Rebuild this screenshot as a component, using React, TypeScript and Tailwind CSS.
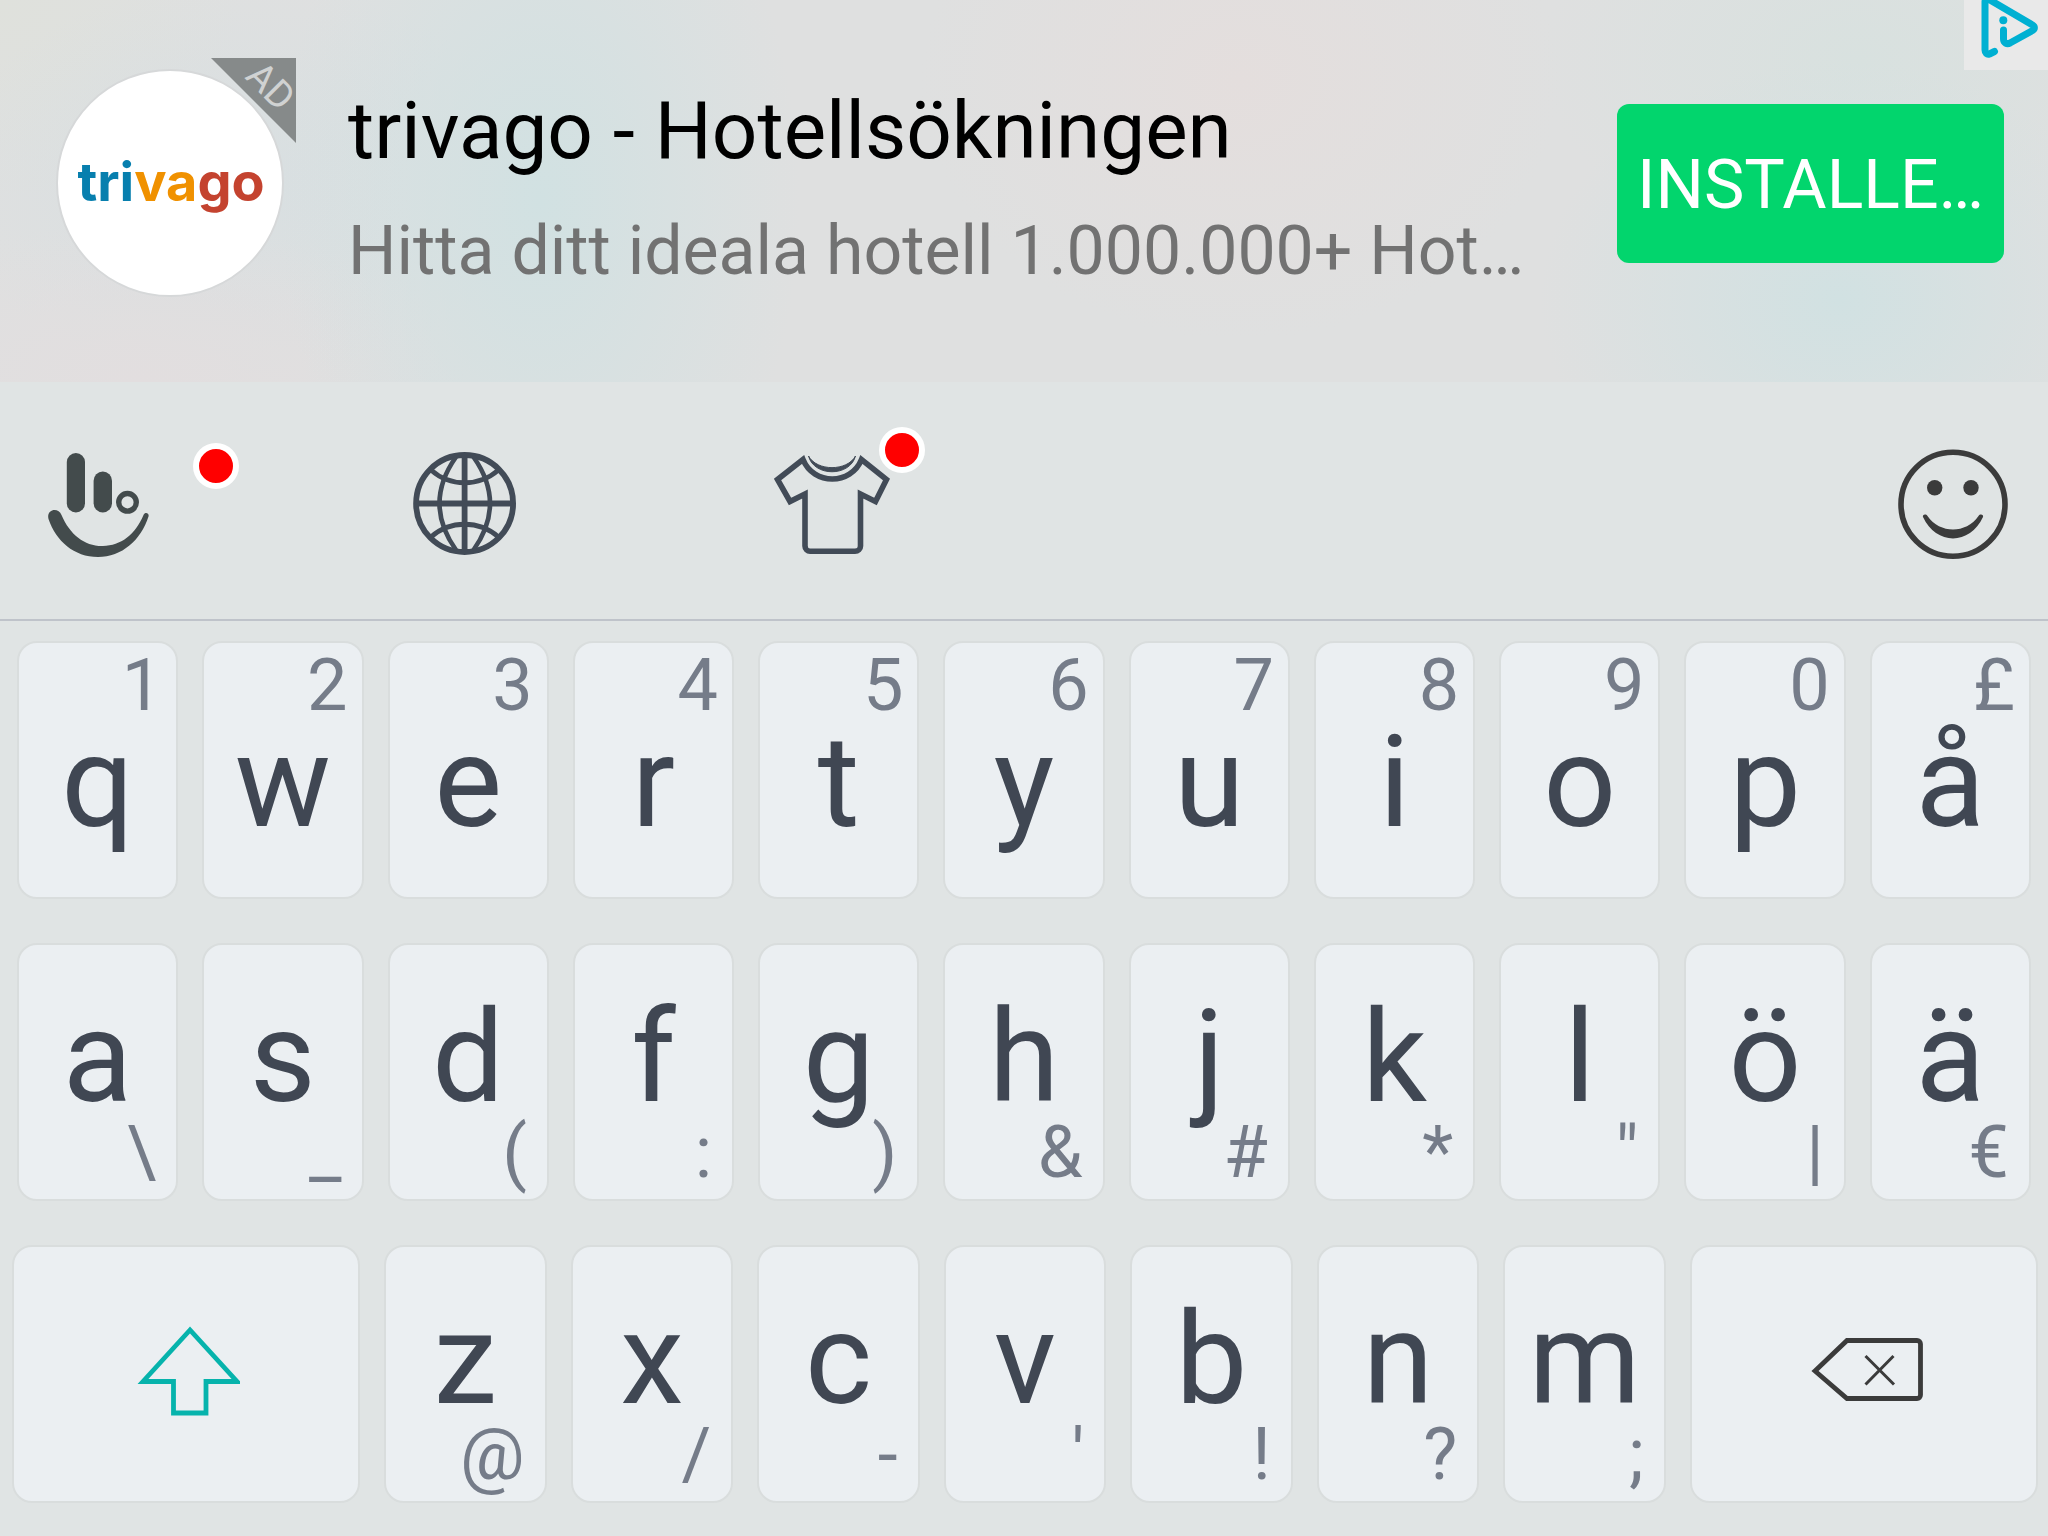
import type { ReactNode } from "react";

type KeyDef = { label: string; hint: string };

const toKeys = (letters: string, hints: string): KeyDef[] =>
  letters.split("").map((label, i) => ({ label, hint: hints[i] }));

const topRow = toKeys("qwertyuiopå", "1234567890£");
const homeRow = toKeys("asdfghjklöä", "\\_(:)&#*\"|€");
const bottomRow = toKeys("zxcvbnm", "@/-'!?;");

const keyBase = "rounded-[20px] border-2 border-[#d9dddd] bg-[#ebeff2]";

function LetterKey({ label, hint, hintTop }: KeyDef & { hintTop?: boolean }) {
  const letter = (
    <span className="text-center text-[128px] leading-[120px] text-[#404753]">{label}</span>
  );

  if (hintTop) {
    return (
      <button className={`${keyBase} flex flex-col pt-[7px] pb-[55px]`}>
        <span className="pr-[14px] text-right text-7xl leading-[72px] text-[#757c89]">{hint}</span>
        {letter}
      </button>
    );
  }

  return (
    <button className={`${keyBase} flex flex-col pt-[52px] pb-[10px]`}>
      {letter}
      <span className="pr-5 text-right text-7xl leading-[72px] text-[#757c89]">{hint}</span>
    </button>
  );
}

function ToolButton({ label, children }: { label: string; children: ReactNode }) {
  return (
    <button aria-label={label} className="relative size-32 shrink-0">
      {children}
    </button>
  );
}

function AdBanner() {
  return (
    <section className="relative flex items-start bg-[#dfe0e0] bg-[radial-gradient(ellipse_260px_420px_at_540px_200px,#d1e1e2,transparent),radial-gradient(ellipse_300px_240px_at_1840px_300px,#d1e1e2,transparent),radial-gradient(ellipse_320px_260px_at_1240px_80px,#e4dedd,transparent),radial-gradient(ellipse_340px_160px_at_140px_382px,#e2dedf,transparent),radial-gradient(ellipse_300px_200px_at_240px_180px,#d8dfe1,transparent),radial-gradient(ellipse_320px_200px_at_1860px_60px,#d8e1df,transparent),radial-gradient(ellipse_240px_200px_at_0px_0px,#dfe1dc,transparent)] pt-[69px] pr-11 pb-[85px] pl-14">
      <div className="relative shrink-0">
        <div className="flex size-[228px] items-center justify-center rounded-full border-2 border-[#d6d8d9] bg-white pb-[2px] pl-[2px]">
          <span className="font-[Inter,sans-serif] text-[54px] leading-[60px] font-bold text-[#077fae]">
            tri<span className="text-[#f09100]">va</span>
            <span className="text-[#c4432f]">go</span>
          </span>
        </div>
        <div className="absolute -top-[11px] -right-3 size-[85px] bg-[#868a8a] [clip-path:polygon(0_0,100%_0,100%_100%)]">
          <span className="absolute top-[8px] right-0 rotate-45 text-[38px] leading-10 text-[#d0d2d2]">
            AD
          </span>
        </div>
      </div>

      <div className="flex min-w-0 flex-1 flex-col gap-8 overflow-hidden pt-[14px] pl-16 whitespace-nowrap">
        <h1 className="text-[80px] leading-24 text-black">trivago - Hotellsökningen</h1>
        <p className="text-[68px] leading-20 text-[#727272]">
          Hitta ditt ideala hotell 1.000.000+ Hot…
        </p>
      </div>

      <button className="mt-[35px] w-[387px] shrink-0 rounded-xl bg-[#02d56d] pt-[41px] pb-[38px] text-[68px] leading-20 text-white">
        INSTALLE…
      </button>

      <a href="#adchoices" aria-label="AdChoices" className="absolute top-0 right-0 bg-[#e9e9e9]">
        <svg viewBox="0 0 84 70" className="h-[70px] w-[84px]" fill="none">
          <path
            d="M30.500 51.500l-5 2.500c-2.500 1-4.500-1-4.500-4V2c0-3 2.500-3.500 5-2L68.500 25c2.500 1.500 2.500 4 0 5.500L46 43c-3 1.500-6.500 0-6.500-4V30"
            stroke="#00b0d2"
            strokeWidth="7"
            strokeLinecap="round"
            strokeLinejoin="round"
          />
          <circle cx="39.300" cy="20.300" r="4" fill="#00b0d2" />
        </svg>
      </a>
    </section>
  );
}

function Toolbar() {
  return (
    <nav className="flex border-b-2 border-[#bfc3ca] pt-[55px] pr-[31px] pb-[54px] pl-9">
      <div className="flex flex-1 gap-[236px]">
        <ToolButton label="Menu">
          <svg viewBox="36 437 128 128" fill="#434b4c" className="size-32">
            <rect x="66.800" y="453" width="18.200" height="59.500" rx="9.100" />
            <rect x="93.600" y="471.500" width="18.400" height="41" rx="9.200" />
            <circle cx="127.500" cy="502.300" r="8.800" fill="none" stroke="#434b4c" strokeWidth="5.400" />
            <path d="M48.500 519C46 509 58.500 507 61.500 515C70 535 85 546.500 103 546C121 545.500 135 535 143.500 515C145 511.500 149.500 513 148.500 516.500C141 540 122 557 98 557C74 557 56 541 48.500 519Z" />
          </svg>
          <span className="absolute top-[6px] left-[157px] size-[46px] rounded-full border-6 border-white bg-[#ff0000]" />
        </ToolButton>
        <ToolButton label="Language">
          <svg viewBox="400 437 128 128" fill="none" stroke="#424b57" strokeWidth="5" className="size-32">
            <circle cx="464.600" cy="503.500" r="48.500" strokeWidth="5.800" />
            <path d="M464.600 455V552M416 503.500H513" strokeWidth="5.800" />
            <path d="M456 457C434 488 434 519 456 550M473.500 457C495.500 488 495.500 519 473.500 550" strokeWidth="4.600" />
            <path d="M431 470C450 487 479 487 498.500 470M431 537C450 520 479 520 498.500 537" strokeWidth="4.800" />
          </svg>
        </ToolButton>
        <ToolButton label="Themes">
          <svg viewBox="764 437 128 128" fill="none" stroke="#424b57" strokeWidth="5.600" className="size-32">
            <path d="M803 459.500L777.500 479.500L790 501.500L805 494V546C805 549 807.500 551.300 810 551.300H855C858 551.300 860.500 549 860.500 546V494L875.500 501.500L886.500 479.500L861.500 459.500C851 485.500 813.500 485.500 803 459.500Z" />
            <path
              d="M808.500 456C817 471.500 847 471.500 855.500 456C850 477 814 477 808.500 456Z"
              fill="#424b57"
              strokeWidth="1"
            />
          </svg>
          <span className="absolute -top-[10px] left-[115px] size-[46px] rounded-full border-6 border-white bg-[#ff0000]" />
        </ToolButton>
      </div>
      <ToolButton label="Emoji">
        <svg viewBox="1889 437 128 128" fill="#3b3b3b" className="size-32">
          <circle cx="1953" cy="504.300" r="52" fill="none" stroke="#3b3b3b" strokeWidth="5.600" />
          <circle cx="1934.700" cy="487.700" r="7.700" />
          <circle cx="1971" cy="487.700" r="7.700" />
          <path d="M1923 517C1922 514.500 1926 513.500 1927.500 516C1940 534 1966 534 1978.500 516C1980 513.500 1984 514.500 1983 517C1970 545.500 1936 545.500 1923 517Z" />
        </svg>
      </ToolButton>
    </nav>
  );
}

export default function App() {
  return (
    <main className="min-h-screen bg-[#e0e4e4] font-[Roboto,sans-serif]">
      <AdBanner />
      <Toolbar />
      <div className="flex flex-col gap-11 pt-5 pb-8">
        <div className="grid grid-cols-11 gap-6 px-[17px]">
          {topRow.map((k) => (
            <LetterKey key={k.label} {...k} hintTop />
          ))}
        </div>
        <div className="grid grid-cols-11 gap-6 px-[17px]">
          {homeRow.map((k) => (
            <LetterKey key={k.label} {...k} />
          ))}
        </div>
        <div className="grid grid-cols-[349fr_repeat(7,163fr)_349fr] gap-6 pr-[10px] pl-3">
          <button aria-label="Shift" className={`${keyBase} flex items-center justify-center`}>
            <svg viewBox="-4 4 108 100" className="h-[100px] w-[108px]" fill="none">
              <path
                d="M54 10L7 61.500H37.500V93H70V61.500H101L54 10Z"
                stroke="#06b3ac"
                strokeWidth="4.800"
              />
            </svg>
          </button>
          {bottomRow.map((k) => (
            <LetterKey key={k.label} {...k} />
          ))}
          <button aria-label="Backspace" className={`${keyBase} flex items-center justify-center`}>
            <svg viewBox="0 0 120 80" className="h-20 w-[120px]" fill="none" stroke="#3b3b3b">
              <path
                d="M11 37L43 6.500H113C115 6.500 116.500 8 116.500 10V61C116.500 63 115 64.500 113 64.500H43L11 37Z"
                strokeWidth="4.800"
              />
              <path d="M61.500 22L90 50.500M89.500 22L61.500 50.500" strokeWidth="3" />
            </svg>
          </button>
        </div>
      </div>
    </main>
  );
}
